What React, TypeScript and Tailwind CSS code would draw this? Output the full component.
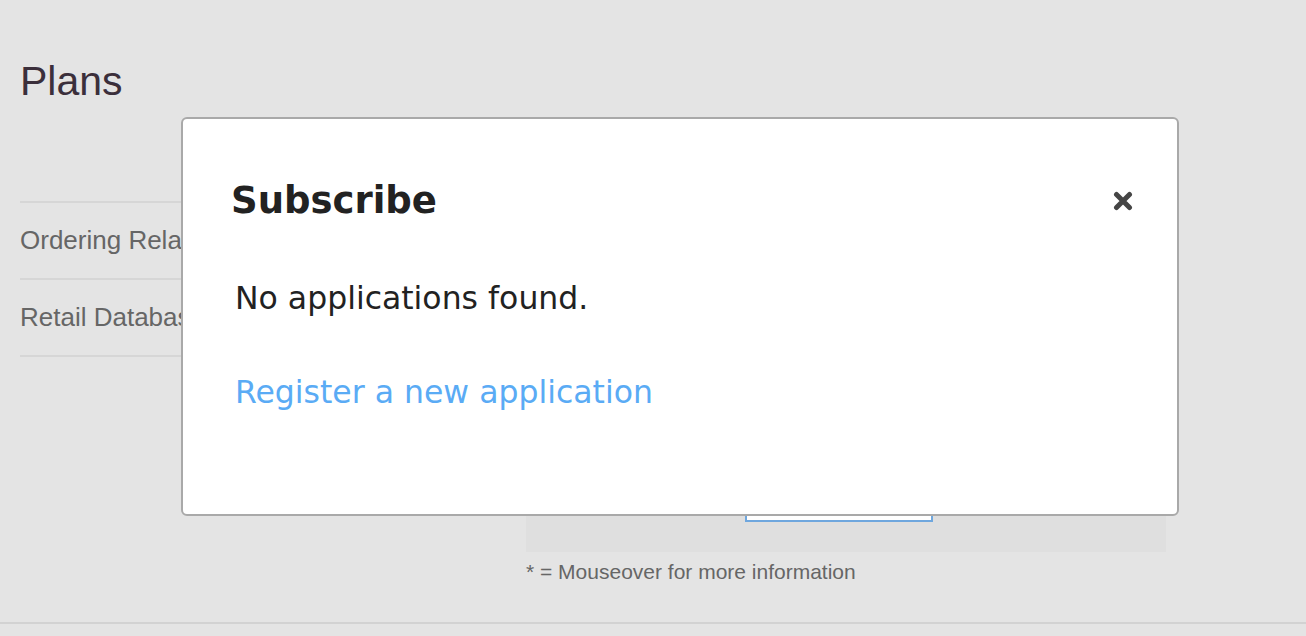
function CloseIcon() {
  return (
    <svg width="20" height="20" viewBox="0 0 20 20" className="text-[#454545]">
      <path d="M3.5 3.5 L16.5 16.5 M16.5 3.5 L3.5 16.5" stroke="currentColor" strokeWidth="5" strokeLinecap="round" />
    </svg>
  )
}

function PlanRow({ name }: { name: string }) {
  return (
    <div className="h-[77px] flex items-center border-b-2 border-[#d6d6d6] text-[26px] text-[#666]">
      {name}
    </div>
  )
}

export default function App() {
  const plans = ['Ordering Related Plan', 'Retail Database Plan']

  return (
    <div className="relative min-h-screen bg-[#e4e4e4] font-['Liberation_Sans',Arial,sans-serif] overflow-hidden">
      <main className="px-5 pt-[61px]">
        <h1 className="text-[41px] leading-none text-[#3b2f3b]">Plans</h1>

        <div className="mt-[99px] w-[480px] border-t-2 border-[#d6d6d6]">
          {plans.map((p) => (
            <PlanRow key={p} name={p} />
          ))}
        </div>

        <div className="ml-[506px] w-[640px]">
          <div className="mt-[24px] h-[171px] bg-[#dfdfdf] flex flex-col justify-end items-center pb-[30px]">
            <button className="w-[188px] h-[44px] border-2 border-[#6fa7de] bg-white text-[#4a90d9] text-[18px] mr-[14px]">
              Subscribe
            </button>
          </div>
          <p className="mt-[7px] text-[21px] leading-[1.2] text-[#666]">
            * = Mouseover for more information
          </p>
        </div>
      </main>

      <div className="mt-[38px] border-t-2 border-[#d2d2d2] h-[20px]" />

      {/* modal */}
      <div className="absolute left-[181px] top-[117px] w-[998px] h-[399px] bg-white border-2 border-[#a9a9a9] rounded-md font-['DejaVu_Sans',Verdana,sans-serif]">
        <div className="pl-[48px] pr-[44px] pt-[63px]">
          <div className="flex items-center justify-between">
            <h2 className="text-[37px] leading-none font-bold text-[#222]">Subscribe</h2>
            <button className="mt-[1px]">
              <CloseIcon />
            </button>
          </div>
          <div className="pl-[4px]">
            <p className="mt-[64px] text-[31.5px] leading-none text-[#222]">No applications found.</p>
            <a href="#" className="block mt-[62px] text-[31.5px] leading-none text-[#5aabf5]">
              Register a new application
            </a>
          </div>
        </div>
      </div>
    </div>
  )
}
